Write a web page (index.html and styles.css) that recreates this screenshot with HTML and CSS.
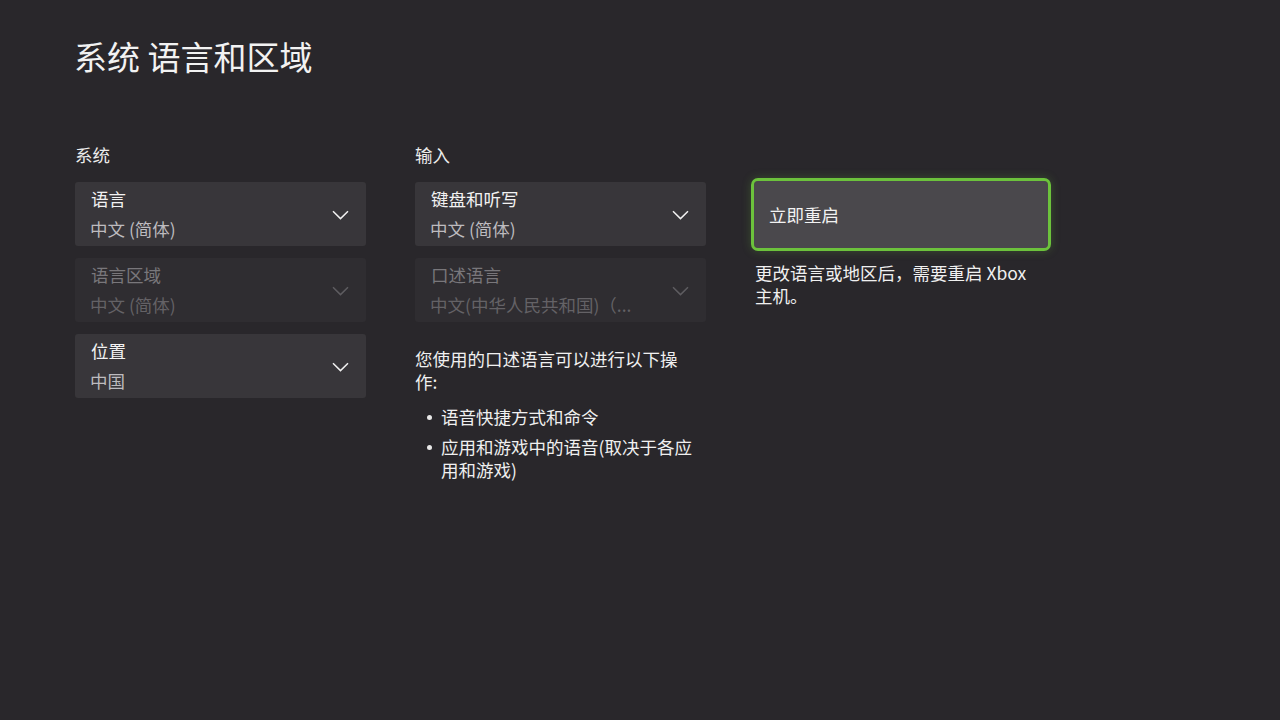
FILE: index.html
```html
<!DOCTYPE html>
<html lang="zh-CN">
<head>
<meta charset="utf-8">
<title>系统 语言和区域</title>
<link rel="stylesheet" href="styles.css">
</head>
<body>
<div class="page">
  <h1 class="title">系统 语言和区域</h1>
  <div class="columns">
    <section class="col">
      <h2 class="section-label">系统</h2>
      <div class="card">
        <div class="card-text">
          <div class="card-label">语言</div>
          <div class="card-value">中文 (简体)</div>
        </div>
        <svg class="chev" viewBox="0 0 17 10" width="17" height="10"><path d="M1 1.2 L8.5 8.6 L16 1.2" fill="none" stroke="currentColor" stroke-width="1.5"/></svg>
      </div>
      <div class="card disabled">
        <div class="card-text">
          <div class="card-label">语言区域</div>
          <div class="card-value">中文 (简体)</div>
        </div>
        <svg class="chev" viewBox="0 0 17 10" width="17" height="10"><path d="M1 1.2 L8.5 8.6 L16 1.2" fill="none" stroke="currentColor" stroke-width="1.5"/></svg>
      </div>
      <div class="card">
        <div class="card-text">
          <div class="card-label">位置</div>
          <div class="card-value">中国</div>
        </div>
        <svg class="chev" viewBox="0 0 17 10" width="17" height="10"><path d="M1 1.2 L8.5 8.6 L16 1.2" fill="none" stroke="currentColor" stroke-width="1.5"/></svg>
      </div>
    </section>
    <section class="col">
      <h2 class="section-label">输入</h2>
      <div class="card">
        <div class="card-text">
          <div class="card-label">键盘和听写</div>
          <div class="card-value">中文 (简体)</div>
        </div>
        <svg class="chev" viewBox="0 0 17 10" width="17" height="10"><path d="M1 1.2 L8.5 8.6 L16 1.2" fill="none" stroke="currentColor" stroke-width="1.5"/></svg>
      </div>
      <div class="card disabled">
        <div class="card-text">
          <div class="card-label">口述语言</div>
          <div class="card-value">中文(中华人民共和国)（...</div>
        </div>
        <svg class="chev" viewBox="0 0 17 10" width="17" height="10"><path d="M1 1.2 L8.5 8.6 L16 1.2" fill="none" stroke="currentColor" stroke-width="1.5"/></svg>
      </div>
      <p class="desc">您使用的口述语言可以进行以下操作:</p>
      <ul class="bullets">
        <li>语音快捷方式和命令</li>
        <li>应用和游戏中的语音(取决于各应用和游戏)</li>
      </ul>
    </section>
    <section class="col col-action">
      <button class="restart">立即重启</button>
      <p class="note">更改语言或地区后，需要重启 Xbox 主机。</p>
    </section>
  </div>
</div>
</body>
</html>
```

FILE: styles.css
```css
html, body {
  margin: 0;
  padding: 0;
}
body {
  width: 1280px;
  height: 720px;
  overflow: hidden;
  background: #29272b;
  color: #f0f0f0;
  font-family: "Noto Sans CJK SC", "Noto Sans", sans-serif;
  font-size: 17.5px;
}
.page {
  padding: 35px 0 0 74px;
}
.title {
  margin: 0;
  font-size: 33px;
  font-weight: 400;
  line-height: 42px;
  color: #f2f2f2;
}
.columns {
  display: flex;
  gap: 49px;
  margin-top: 67px;
  padding-left: 1px;
}
.col {
  width: 291px;
  display: flex;
  flex-direction: column;
}
.section-label {
  margin: 0 0 16px 0;
  font-size: 17.5px;
  font-weight: 400;
  line-height: 22px;
  color: #ececec;
}
.card {
  height: 64px;
  box-sizing: border-box;
  padding: 6px 17px 6px 15px;
  margin-bottom: 12px;
  background: #38363a;
  border-radius: 3px;
  display: flex;
  align-items: center;
  justify-content: space-between;
  color: #f2f2f2;
}
.card-text {
  display: flex;
  flex-direction: column;
  gap: 8px;
}
.card-label {
  line-height: 22px;
  color: #f2f2f2;
  padding-left: 1px;
}
.card-value {
  line-height: 22px;
  color: #bdbbbf;
}
.chev {
  color: #f0f0f0;
  margin-top: 2px;
}
.card.disabled {
  background: #2f2d31;
}
.card.disabled .card-label {
  color: #79777b;
}
.card.disabled .card-value {
  color: #646266;
}
.card.disabled .chev {
  color: #5e5c60;
}
.desc {
  margin: 13px 0 0 0;
  width: 272px;
  line-height: 23px;
  color: #f0f0f0;
}
.bullets {
  margin: 12px 0 0 0;
  padding: 0 0 0 26px;
  width: 256px;
  line-height: 23px;
  color: #f0f0f0;
  list-style: none;
}
.bullets li {
  position: relative;
  margin-bottom: 7px;
}
.bullets li::before {
  content: "";
  position: absolute;
  left: -14px;
  top: 10px;
  width: 5px;
  height: 5px;
  border-radius: 50%;
  background: #e8e8e8;
}
.col-action {
  width: 292px;
  padding-top: 38px;
}
.restart {
  height: 65px;
  width: 292px;
  box-sizing: border-box;
  padding: 0 14px;
  text-align: left;
  background: #4a484c;
  border: none;
  border-radius: 3px;
  outline: 3px solid #6cc23c;
  outline-offset: 1px;
  box-shadow: 0 0 0 1px #4a484c, 0 0 10px 4px rgba(108, 194, 60, 0.25);
  font-family: "Noto Sans CJK SC", "Noto Sans", sans-serif;
  font-size: 17.5px;
  color: #f2f2f2;
  line-height: 22px;
}
.note {
  margin: 14px 0 0 0;
  width: 285px;
  line-height: 23px;
  color: #f0f0f0;
}
```
